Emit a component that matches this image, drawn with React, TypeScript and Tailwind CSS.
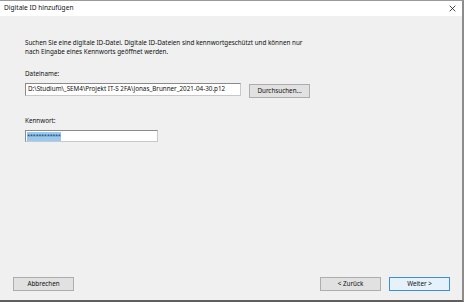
import React from 'react';

export default function App() {
  const font = { fontFamily: '"Noto Sans", "Liberation Sans", Arial, sans-serif' };
  return (
    <div
      className="w-[464px] h-[302px] flex flex-col bg-[#f0f0f0] border-t border-t-[#9a9a9a] border-r-2 border-r-[#8c8c8c] border-b-2 border-b-[#5f5f5f] text-[#111] overflow-hidden"
      style={font}
    >
      {/* Title bar */}
      <div className="h-[15px] shrink-0 bg-white flex items-center justify-between pl-[4px] pr-[6px]">
        <span className="text-[6.6px] leading-none">Digitale ID hinzufügen</span>
        <svg width="7" height="7" viewBox="0 0 10 10" className="text-[#222]">
          <path d="M1 1 L9 9 M9 1 L1 9" stroke="currentColor" strokeWidth="1.2" />
        </svg>
      </div>

      {/* Content */}
      <div className="flex-1 flex flex-col px-[25px] pt-[22px]">
        <p className="text-[6.3px] leading-[9px] whitespace-nowrap">
          Suchen Sie eine digitale ID-Datei. Digitale ID-Dateien sind kennwortgeschützt und können nur
          <br />
          nach Eingabe eines Kennworts geöffnet werden.
        </p>

        <label className="mt-[13px] text-[6.3px] leading-[9px]">Dateiname:</label>
        <div className="mt-[5px] flex items-start gap-[8px]">
          <div className="w-[216px] h-[13px] bg-white border border-[#8a8a8a] border-b-[#c8c8c8] border-r-[#c8c8c8] flex items-center pl-[2px] text-[6.3px] leading-none whitespace-nowrap overflow-hidden">
            D:\Studium\_SEM4\Projekt IT-S 2FA\Jonas_Brunner_2021-04-30.p12
          </div>
          <button className="mt-[1px] w-[61px] h-[14px] bg-[#e1e1e1] border border-[#adadad] text-[6.3px] leading-none flex items-center justify-center">
            Durchsuchen...
          </button>
        </div>

        <label className="mt-[18px] text-[6.3px] leading-[9px]">Kennwort:</label>
        <div className="mt-[5px] w-[133px] h-[12px] bg-white border border-[#8a8a8a] border-b-[#c8c8c8] border-r-[#c8c8c8] flex items-center pl-[1px]">
          <span className="h-[9px] w-[34px] bg-[#99c9ef] text-[6px] leading-[9px] text-[#1a3c66] overflow-hidden whitespace-nowrap tracking-[-0.5px]">
            ************
          </span>
        </div>

        <div className="flex-1" />

        {/* Footer buttons */}
        <div className="flex items-center pb-[9px] -ml-[12px] -mr-[13px]">
          <button className="w-[61px] h-[14px] bg-[#e1e1e1] border border-[#adadad] text-[6.3px] leading-none flex items-center justify-center">
            Abbrechen
          </button>
          <div className="flex-1" />
          <button className="w-[61px] h-[14px] bg-[#e1e1e1] border border-[#adadad] text-[6.3px] leading-none flex items-center justify-center">
            &lt; Zurück
          </button>
          <button className="ml-[8px] w-[61px] h-[14px] bg-[#e5f1fb] border border-[#3c8fd8] text-[6.3px] leading-none flex items-center justify-center">
            Weiter &gt;
          </button>
        </div>
      </div>
    </div>
  );
}
